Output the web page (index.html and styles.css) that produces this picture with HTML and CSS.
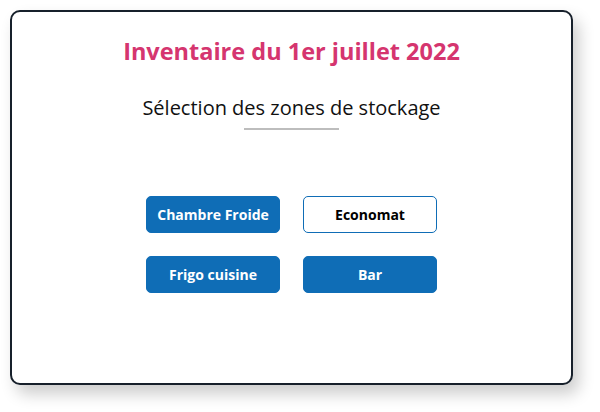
FILE: index.html
```html
<!DOCTYPE html>
<html lang="fr">
<head>
  <meta charset="UTF-8">
  <meta name="viewport" content="width=device-width, initial-scale=1.0">
  <title>Inventaire</title>
  <link rel="stylesheet" href="styles.css">
</head>
<body>
  <div class="card">
    <h1 class="title">Inventaire du 1er juillet 2022</h1>
    <h2 class="subtitle">Sélection des zones de stockage</h2>
    <div class="divider"></div>
    <div class="zones">
      <button class="zone">Chambre Froide</button>
      <button class="zone zone-outline">Economat</button>
      <button class="zone">Frigo cuisine</button>
      <button class="zone">Bar</button>
    </div>
  </div>
</body>
</html>
```

FILE: styles.css
```css
body {
  box-sizing: border-box;
  min-height: 412px;
  margin: 0;
  padding: 10px;
  background: #fff;
  font-family: "Open Sans", Arial, sans-serif;
}

.card {
  box-sizing: border-box;
  width: 563px;
  height: 375px;
  border: 2px solid #17202b;
  border-radius: 10px;
  background: #fff;
  box-shadow: 6px 9px 16px rgba(0, 0, 0, 0.2);
  display: flex;
  flex-direction: column;
  align-items: center;
  padding-top: 23px;
}

.title {
  margin: 0;
  font-size: 23.5px;
  font-weight: 700;
  line-height: 32px;
  color: #d5356f;
}

.subtitle {
  margin: 27px 0 0;
  font-size: 20px;
  font-weight: 400;
  line-height: 28px;
  color: #111;
}

.divider {
  width: 95px;
  height: 2px;
  background: #bdbdbd;
  margin-top: 6px;
}

.zones {
  display: grid;
  grid-template-columns: 134px 134px;
  gap: 23px;
  margin-top: 66px;
}

.zone {
  height: 37px;
  border: 1px solid #0f6db6;
  border-radius: 5px;
  background: #0f6db6;
  color: #fff;
  font-family: "Open Sans", Arial, sans-serif;
  font-size: 14px;
  font-weight: 700;
  cursor: pointer;
}

.zone-outline {
  background: #fff;
  color: #000;
}
```
